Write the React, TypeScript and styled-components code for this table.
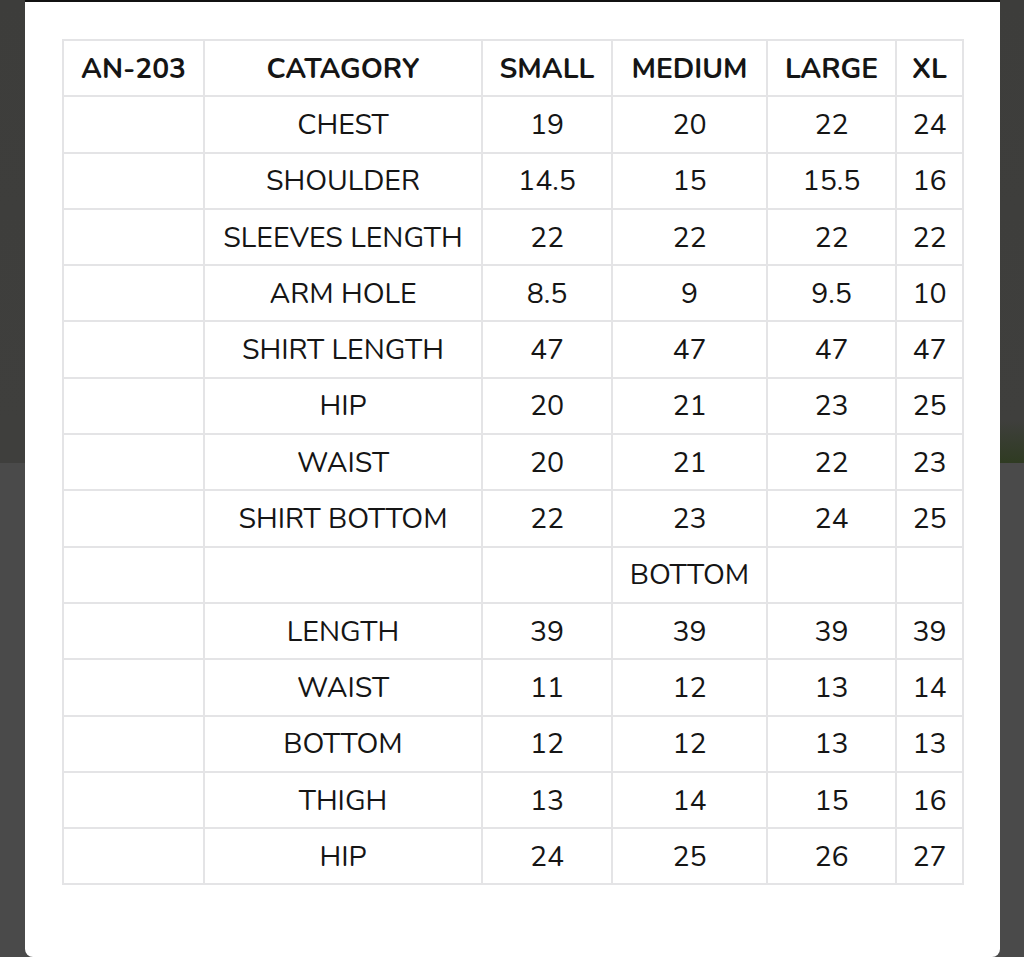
import React from "react";
import styled, { createGlobalStyle } from "styled-components";

const Global = createGlobalStyle`
  html, body { margin: 0; padding: 0; background: #4a4a4a; }
  body { font-family: "Nunito", Lato, "Open Sans", sans-serif; }
`;

const Page = styled.div`
  display: flex;
  width: 1024px;
  height: 957px;
  overflow: hidden;
`;

const Backdrop = styled.div<{ $w: number; $tint: string }>`
  flex: 0 0 ${(p) => p.$w}px;
  height: 100%;
  background: linear-gradient(
    to bottom,
    #3d3d3b 0px,
    #3f3f3d 420px,
    ${(p) => p.$tint} 463px,
    #4a4a4a 463px,
    #4a4a4a 100%
  );
`;

const Modal = styled.div`
  flex: 1 1 auto;
  height: 957px;
  box-sizing: border-box;
  background: #fff;
  border-top: 2px solid #111;
  border-radius: 0 0 8px 8px;
  padding: 37px 36px 0 37px;
`;

const Table = styled.table`
  width: 900px;
  border-collapse: collapse;
  border: 2px solid #e4e4e6;
  table-layout: fixed;
  color: #151515;
`;

const Cell = styled.td<{ $head?: boolean }>`
  border: 2px solid #e4e4e6;
  height: 56.3px;
  box-sizing: border-box;
  padding: 0;
  text-align: center;
  vertical-align: middle;
  font-size: ${(p) => (p.$head ? "28.2px" : "28.5px")};
  font-weight: ${(p) => (p.$head ? 700 : 400)};
  white-space: nowrap;
`;

const widths = [141, 278, 130, 155, 129, 67];

const header = ["AN-203", "CATAGORY", "SMALL", "MEDIUM", "LARGE", "XL"];

const rows: string[][] = [
  ["", "CHEST", "19", "20", "22", "24"],
  ["", "SHOULDER", "14.5", "15", "15.5", "16"],
  ["", "SLEEVES LENGTH", "22", "22", "22", "22"],
  ["", "ARM HOLE", "8.5", "9", "9.5", "10"],
  ["", "SHIRT LENGTH", "47", "47", "47", "47"],
  ["", "HIP", "20", "21", "23", "25"],
  ["", "WAIST", "20", "21", "22", "23"],
  ["", "SHIRT BOTTOM", "22", "23", "24", "25"],
  ["", "", "", "BOTTOM", "", ""],
  ["", "LENGTH", "39", "39", "39", "39"],
  ["", "WAIST", "11", "12", "13", "14"],
  ["", "BOTTOM", "12", "12", "13", "13"],
  ["", "THIGH", "13", "14", "15", "16"],
  ["", "HIP", "24", "25", "26", "27"],
];

export default function App() {
  return (
    <>
      <Global />
      <Page>
        <Backdrop $w={25} $tint="#3f3f3d" />
        <Modal>
          <Table>
            <colgroup>
              {widths.map((w, i) => (
                <col key={i} style={{ width: w }} />
              ))}
            </colgroup>
            <thead>
              <tr>
                {header.map((h) => (
                  <Cell as="th" $head key={h}>
                    {h}
                  </Cell>
                ))}
              </tr>
            </thead>
            <tbody>
              {rows.map((r, i) => (
                <tr key={i}>
                  {r.map((c, j) => (
                    <Cell key={j}>{c}</Cell>
                  ))}
                </tr>
              ))}
            </tbody>
          </Table>
        </Modal>
        <Backdrop $w={26} $tint="#2f3b22" />
      </Page>
    </>
  );
}
